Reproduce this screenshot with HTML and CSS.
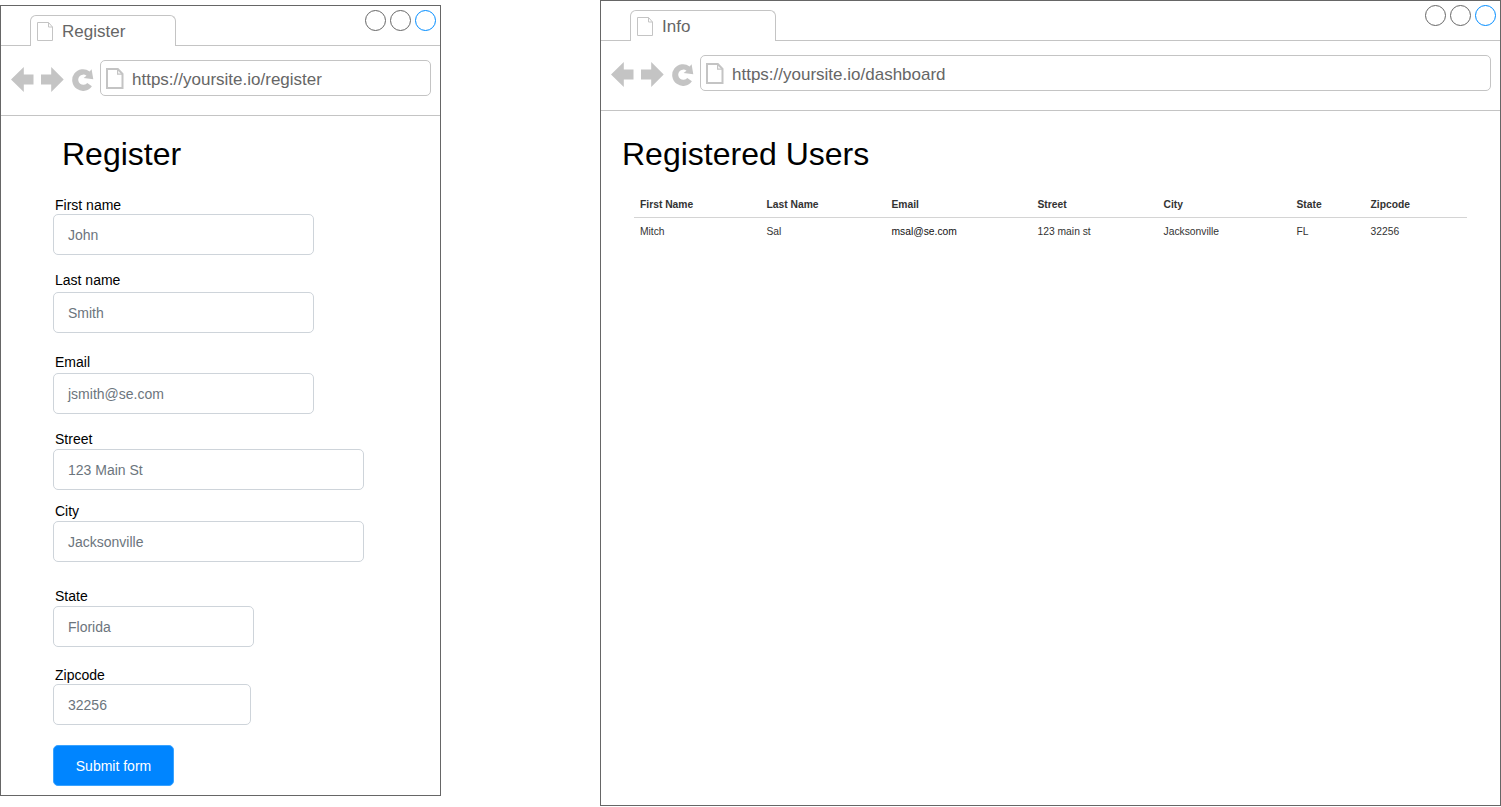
FILE: index.html
```html
<!DOCTYPE html>
<html lang="en">
<head>
<meta charset="utf-8">
<title>Register and Info</title>
<link rel="stylesheet" href="styles.css">
</head>
<body>
<svg class="defs" width="0" height="0">
  <defs>
    <symbol id="page-thin" viewBox="0 0 17 20"><path d="M.5 .5H11.500L15.500 5V18.500H.5ZM11.500 .5V5H15.500"/></symbol>
    <symbol id="page" viewBox="0 0 18 21"><path stroke-width="2" d="M1 1H11.800L16.500 6V20H1Z"/><path stroke-width="1.200" d="M11.600 1V6.200H16.500"/></symbol>
    <symbol id="nav" viewBox="0 0 84 26">
      <path d="M0 13.500L12.800 1V8.500H22.500V18.500H12.800V26Z"/>
      <path d="M52.700 13.500L40.200 1V8.500H30V18.500H40.200V26Z"/>
      <path d="M80.600 3.200L82.300 13.200L72.600 11.900L75.500 9.700A5.100 5.100 0 1 0 76.300 16.900L80.900 20.200A10.800 10.800 0 1 1 78.600 5.500Z"/>
    </symbol>
  </defs>
</svg>
<main class="board">
  <section class="window window-register">
    <header class="tabs">
      <div class="tab"><svg class="tab-icon"><use href="#page-thin"/></svg><span>Register</span></div>
      <div class="controls"><i class="dot"></i><i class="dot"></i><i class="dot dot-active"></i></div>
    </header>
    <div class="toolbar">
      <svg class="nav"><use href="#nav"/></svg>
      <div class="address"><svg class="address-icon"><use href="#page"/></svg><span>https://yoursite.io/register</span></div>
    </div>
    <h1 class="title">Register</h1>
    <form class="form">
      <div class="field first"><label>First name</label><div class="input">John</div></div>
      <div class="field last"><label>Last name</label><div class="input">Smith</div></div>
      <div class="field email"><label>Email</label><div class="input">jsmith@se.com</div></div>
      <div class="field street"><label>Street</label><div class="input">123 Main St</div></div>
      <div class="field city"><label>City</label><div class="input">Jacksonville</div></div>
      <div class="field state"><label>State</label><div class="input">Florida</div></div>
      <div class="field zip"><label>Zipcode</label><div class="input">32256</div></div>
      <button class="submit" type="button">Submit form</button>
    </form>
  </section>
  <section class="window window-info">
    <header class="tabs">
      <div class="tab"><svg class="tab-icon"><use href="#page-thin"/></svg><span>Info</span></div>
      <div class="controls"><i class="dot"></i><i class="dot"></i><i class="dot dot-active"></i></div>
    </header>
    <div class="toolbar">
      <svg class="nav"><use href="#nav"/></svg>
      <div class="address"><svg class="address-icon"><use href="#page"/></svg><span>https://yoursite.io/dashboard</span></div>
    </div>
    <h1 class="title">Registered Users</h1>
    <div class="users">
      <div class="row head"><span>First Name</span><span>Last Name</span><span>Email</span><span>Street</span><span>City</span><span>State</span><span>Zipcode</span></div>
      <div class="row"><span>Mitch</span><span>Sal</span><span class="dark">msal@se.com</span><span>123 main st</span><span>Jacksonville</span><span>FL</span><span>32256</span></div>
    </div>
  </section>
</main>
</body>
</html>
```

FILE: styles.css
```css
* { box-sizing: border-box; }
body {
  margin: 0;
  background: #fff;
  font-family: "Liberation Sans", Arial, sans-serif;
}
.defs { position: absolute; }
.board {
  display: flex;
  justify-content: space-between;
  align-items: flex-start;
  width: 1501px;
  height: 807px;
}
.window { border: 1px solid #666; background: #fff; }
.window-register { width: 441px; height: 791px; margin-top: 5px; }
.window-info { width: 901px; height: 806px; }

.tabs { display: flex; height: 40px; }
.tabs::before {
  content: "";
  width: 29px;
  border-bottom: 1px solid #c4c4c4;
}
.tab {
  display: flex;
  align-items: center;
  width: 146px;
  height: 31px;
  margin-top: 9px;
  padding: 2px 0 0 6px;
  border: 1px solid #c4c4c4;
  border-bottom: 0;
  border-radius: 6px 6px 0 0;
  color: #666;
  font-size: 17px;
}
.tab-icon {
  width: 17px;
  height: 20px;
  margin: -1px 8px 0 0;
  fill: none;
  stroke: #c4c4c4;
  stroke-width: 1;
}
.controls {
  display: flex;
  flex: 1;
  justify-content: flex-end;
  gap: 4px;
  padding: 4px 4px 0 0;
  border-bottom: 1px solid #c4c4c4;
}
.dot {
  width: 21px;
  height: 21px;
  border: 1px solid #666;
  border-radius: 50%;
}
.dot-active { border-color: #008cff; }

.toolbar {
  display: flex;
  height: 70px;
  padding: 14px 9px 0 10px;
  border-bottom: 1px solid #c4c4c4;
}
.nav { width: 84px; height: 26px; margin: 6px 5px 0 0; fill: #c4c4c4; }
.address {
  display: flex;
  align-items: center;
  flex: 1;
  height: 36px;
  padding: 3px 0 0 5px;
  border: 1px solid #c4c4c4;
  border-radius: 5px;
  color: #666;
  font-size: 17px;
}
.address-icon {
  width: 18px;
  height: 21px;
  margin: -2px 8px 0 0;
  fill: none;
  stroke: #c4c4c4;
}

.title {
  margin: 0;
  font-size: 32px;
  font-weight: 400;
  line-height: 38px;
  color: #000;
}
.window-register .title { padding: 19px 0 0 61px; }
.window-info .title { padding: 24px 0 0 21px; }

.form { padding: 24px 0 0 52px; }
.field { width: 261px; font-size: 14px; }
.field label { display: block; padding-left: 2px; line-height: 16px; color: #000; }
.input {
  height: 41px;
  margin-top: 2px;
  padding-left: 14px;
  border: 1px solid #ced4da;
  border-radius: 5px;
  line-height: 40px;
  color: #6c757d;
}
.first .input { margin-top: 1px; }
.last { margin-top: 17px; }
.last .input { margin-top: 4px; }
.email { margin-top: 21px; }
.email .input { margin-top: 3px; }
.street { width: 311px; margin-top: 17px; }
.city { width: 311px; margin-top: 13px; }
.state { width: 201px; margin-top: 26px; }
.zip { width: 198px; margin-top: 20px; }
.zip .input { margin-top: 1px; }
.submit {
  display: block;
  width: 121px;
  height: 41px;
  margin-top: 20px;
  padding: 0;
  border: 1px solid #3aa3ff;
  border-radius: 5px;
  background: #0085ff;
  color: #fff;
  font: 14px "Liberation Sans", Arial, sans-serif;
}

.users { width: 833px; margin: 17px 0 0 33px; }
.row {
  display: grid;
  grid-template-columns: 126.500px 125px 146px 126px 133px 74px 1fr;
  padding: 1px 0 0 6px;
  height: 28px;
  line-height: 26px;
  font-size: 10.300px;
  color: #333;
}
.head { padding-top: 2px; border-bottom: 1px solid #d4d4d4; font-weight: 700; }
.dark { color: #111; }
```
